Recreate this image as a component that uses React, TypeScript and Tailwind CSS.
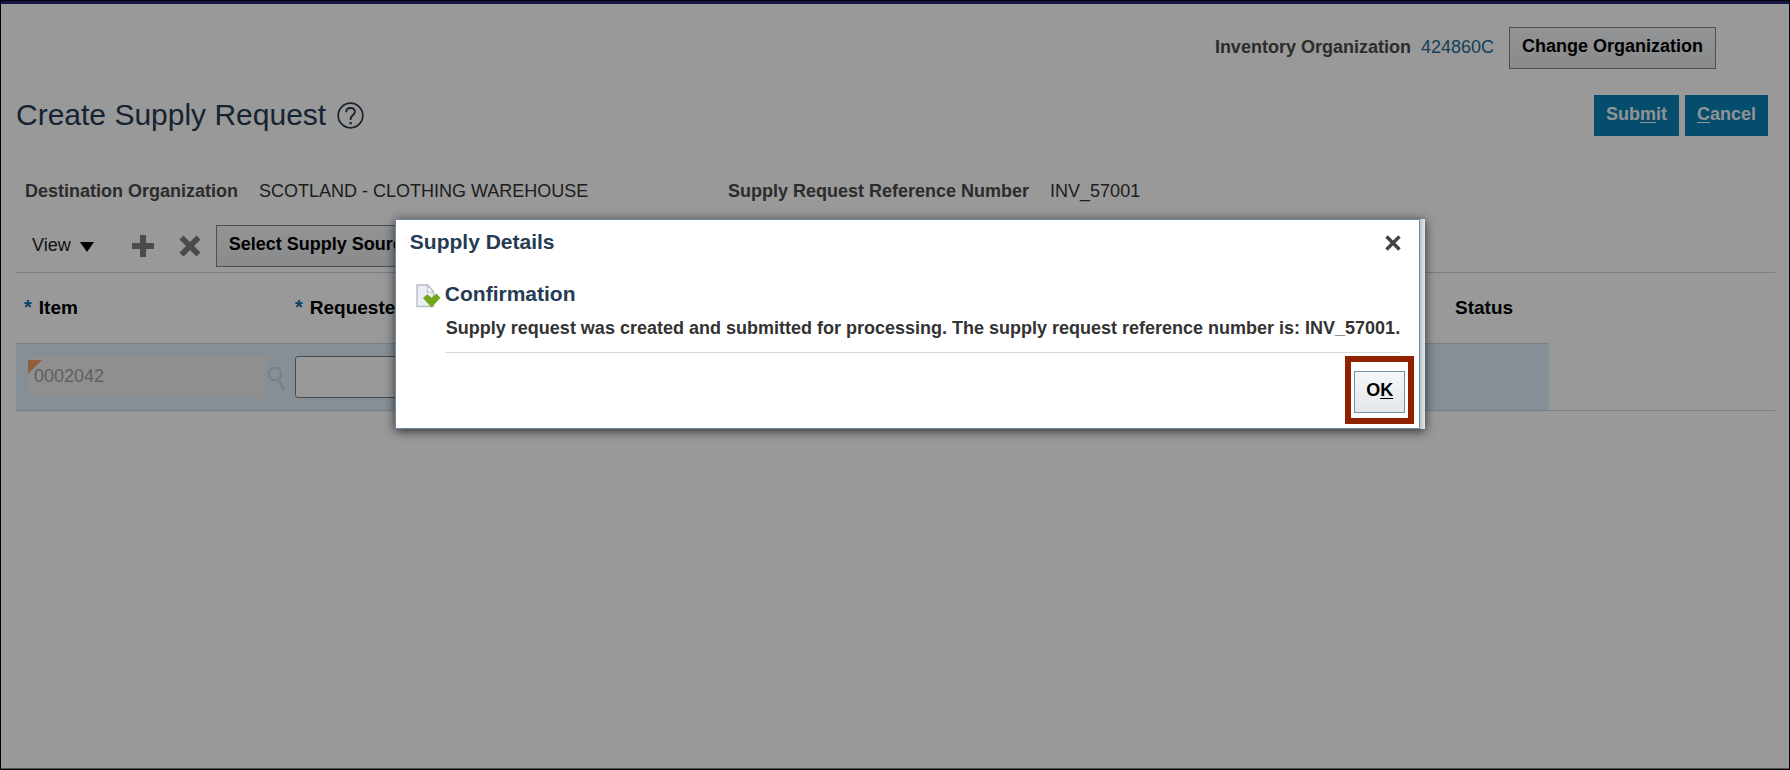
import React from "react";

function HelpIcon() {
  return (
    <svg width="27" height="27" viewBox="0 0 27 27" fill="none" stroke="#2c3a4a" aria-hidden="true">
      <circle cx="13.5" cy="13.5" r="12.3" strokeWidth="1.7" />
      <path d="M9.2 10.2c0-2.6 1.8-4.2 4.4-4.2 2.500 0 4.300 1.500 4.300 3.800 0 3.400-4.300 3.600-4.300 7.300v.9" strokeWidth="1.8" />
      <path d="M13.600 20v2.300" strokeWidth="2.200" />
    </svg>
  );
}

function AddIcon() {
  return (
    <svg width="22" height="22" viewBox="0 0 22 22" fill="#7d7d7d" aria-hidden="true">
      <path d="M8 0h6v8h8v6h-8v8H8v-8H0V8h8z" />
    </svg>
  );
}

function DeleteIcon() {
  return (
    <svg width="22" height="22" viewBox="0 0 22 22" fill="#7d7d7d" aria-hidden="true">
      <path d="M4.500 0.500L11 7l6.500-6.500 4 4L15 11l6.500 6.500-4 4L11 15l-6.500 6.500-4-4L7 11 0.500 4.500z" />
    </svg>
  );
}

function SearchIcon() {
  return (
    <svg width="20" height="26" viewBox="0 0 20 26" fill="none" stroke="#cbd4e0" aria-hidden="true">
      <circle cx="9" cy="8" r="6.300" strokeWidth="2" />
      <path d="M13 15l5 9" strokeWidth="3" />
    </svg>
  );
}

function CloseIcon() {
  return (
    <svg width="16" height="16" viewBox="0 0 16 16" stroke="#434343" strokeWidth="3.400" aria-hidden="true">
      <path d="M1.500 1.500l13 13M14.500 1.500l-13 13" />
    </svg>
  );
}

function ConfirmationIcon() {
  return (
    <svg width="25" height="24" viewBox="0 0 25 24" aria-hidden="true">
      <path d="M1 1h10.500l6 6.500V22.500H1z" fill="#eceef5" stroke="#b9bdc7" strokeWidth="1.400" />
      <path d="M11.500 1v7h6z" fill="#fff" stroke="#b9bdc7" strokeWidth="1.200" />
      <path d="M7 14l4.200-3.700 4.300 3.400 5-4.200 4 4.200L15.500 23.500z" fill="#73a81c" />
    </svg>
  );
}

const plainButton =
  "h-[42px] whitespace-nowrap border border-[#80868b] bg-linear-to-b from-[#f4f6f8] to-[#e4e7ea] px-3 pb-[3px] font-bold text-black";
const primaryButton = "h-[41px] bg-[#0880b4] px-3 pb-[2px] font-bold text-[#f0f6fa]";

function SupplyDetailsDialog() {
  return (
    <div className="absolute inset-0 flex items-start justify-center bg-black/40 pt-[218px] pl-[30px]">
      <div className="flex shadow-[0_2px_10px_rgba(0,0,0,0.7)]">
        <section
          role="dialog"
          aria-modal="true"
          aria-labelledby="dialog-title"
          className="border border-[#6d89a3] bg-white"
        >
          <header className="flex items-center justify-between pt-2 pr-[18px] pl-[14px]">
            <h2 id="dialog-title" className="text-[21px] leading-7 font-bold text-[#263b54]">
              Supply Details
            </h2>
            <button type="button" aria-label="Close" className="pt-0.5">
              <CloseIcon />
            </button>
          </header>
          <div className="flex gap-1 pt-6 pr-[19px] pl-5">
            <div className="pt-1">
              <ConfirmationIcon />
            </div>
            <div>
              <h3 className="text-[21px] leading-7 font-bold text-[#263b54]">Confirmation</h3>
              <p className="border-b border-[#d5dcdf] pt-1.5 pb-2.5 pl-px leading-7 font-bold text-[#333]">
                Supply request was created and submitted for processing. The supply request reference number is:
                INV_57001.
              </p>
            </div>
          </div>
          <footer className="flex justify-end pt-[18px] pr-[14px] pb-[15px]">
            <div className="relative">
              <button
                type="button"
                className="block h-[42px] border border-[#7890a0] bg-linear-to-b from-[#f4f6f8] to-[#e4e8eb] px-[11px] pb-[3px] font-bold text-black"
              >
                O<span className="underline underline-offset-2">K</span>
              </button>
              <div className="pointer-events-none absolute -inset-x-[9px] -top-[15px] -bottom-[11px] border-6 border-[#912200]" />
            </div>
          </footer>
        </section>
        <div className="w-[5px] bg-linear-to-r from-[#b9c2c6] to-[#e3e9ea]" />
      </div>
    </div>
  );
}

export default function App() {
  return (
    <div className="relative flex min-h-screen flex-col border border-black bg-white font-['Liberation_Sans',Arial,sans-serif] text-[18px] text-[#333]">
      <div className="h-[3px] bg-[#23237b]" />

      <header className="flex items-center justify-end pt-[23px] pr-[73px]">
        <span className="pb-0.5 font-bold text-[#4a4a4a]">Inventory Organization</span>
        <a href="#organization" className="ml-[10px] pb-0.5 text-[#236c93]">
          424860C
        </a>
        <button type="button" className={`${plainButton} ml-[15px]`}>
          Change Organization
        </button>
      </header>

      <main className="flex grow flex-col">
        <div className="flex items-start justify-between pt-[26px] pr-[21px] pl-[15px]">
          <div className="flex items-center gap-[11px]">
            <h1 className="text-[30px] leading-10 text-[#263b54]">Create Supply Request</h1>
            <button type="button" aria-label="Help">
              <HelpIcon />
            </button>
          </div>
          <div className="flex gap-[6px]">
            <button type="button" className={primaryButton}>
              Sub<span className="underline underline-offset-2">m</span>it
            </button>
            <button type="button" className={primaryButton}>
              <span className="underline underline-offset-2">C</span>ancel
            </button>
          </div>
        </div>

        <dl className="grid grid-cols-[703px_1fr] pt-[43px] pl-6 leading-6">
          <div className="flex gap-[21px]">
            <dt className="font-bold text-[#4a4a4a]">Destination Organization</dt>
            <dd>SCOTLAND - CLOTHING WAREHOUSE</dd>
          </div>
          <div className="flex gap-[21px]">
            <dt className="font-bold text-[#4a4a4a]">Supply Request Reference Number</dt>
            <dd>INV_57001</dd>
          </div>
        </dl>

        <div className="mr-[14px] ml-[15px] pt-[22px]">
          <div className="flex items-center border-b border-[#cdd3d6] pb-[5px] pl-4">
            <button type="button" className="flex items-center gap-[9px] pb-0.5 text-[#222]">
              View
              <svg width="14" height="10" viewBox="0 0 14 10" className="mt-1" aria-hidden="true">
                <path d="M0 0h14L7 10z" fill="#000" />
              </svg>
            </button>
            <button type="button" aria-label="Add row" className="ml-[38px]">
              <AddIcon />
            </button>
            <button type="button" aria-label="Delete row" className="ml-[25px]">
              <DeleteIcon />
            </button>
            <button type="button" className={`${plainButton} ml-[15px]`}>
              Select Supply Source
            </button>
          </div>

          <div className="border-b border-[#cdd3d6] pr-[226px]">
            <table className="w-full table-fixed border-collapse text-left">
              <thead>
                <tr className="h-[70px] text-[19px] text-black">
                  <th className="w-[271px] pl-2 font-bold">
                    <span className="mr-[7px] inline-block text-[20px] leading-6 text-[#0872a8]">*</span>
                    Item
                  </th>
                  <th className="pl-2 font-bold">
                    <span className="mr-[7px] inline-block text-[20px] leading-6 text-[#0872a8]">*</span>
                    <span id="quantity-label">Requested Quantity</span>
                  </th>
                  <th className="w-[102px] pl-2 font-bold">Status</th>
                </tr>
              </thead>
              <tbody>
                <tr className="h-[67px] border-t border-[#c5d9df] bg-[#dfeef8]">
                  <td className="pl-3">
                    <div className="flex items-center">
                      <div className="relative w-[238px] bg-[#efeff1]">
                        <input
                          aria-label="Item"
                          disabled
                          defaultValue="0002042"
                          className="block h-[42px] w-full bg-transparent px-1.5 text-[#a0a0a0]"
                        />
                        <svg width="14" height="14" viewBox="0 0 14 14" className="absolute top-1 left-0" aria-hidden="true">
                          <path d="M0 0h14L0 14z" fill="#f29b66" />
                        </svg>
                      </div>
                      <button type="button" aria-label="Search item" className="pt-1">
                        <SearchIcon />
                      </button>
                    </div>
                  </td>
                  <td className="pl-2">
                    <input
                      aria-labelledby="quantity-label"
                      className="block h-[42px] w-[240px] rounded-[3px] border border-[#6f7f85] bg-white px-2"
                    />
                  </td>
                  <td />
                </tr>
              </tbody>
            </table>
          </div>
        </div>
      </main>

      <div className="h-px bg-[#8c8c8c]" />
      <SupplyDetailsDialog />
    </div>
  );
}
